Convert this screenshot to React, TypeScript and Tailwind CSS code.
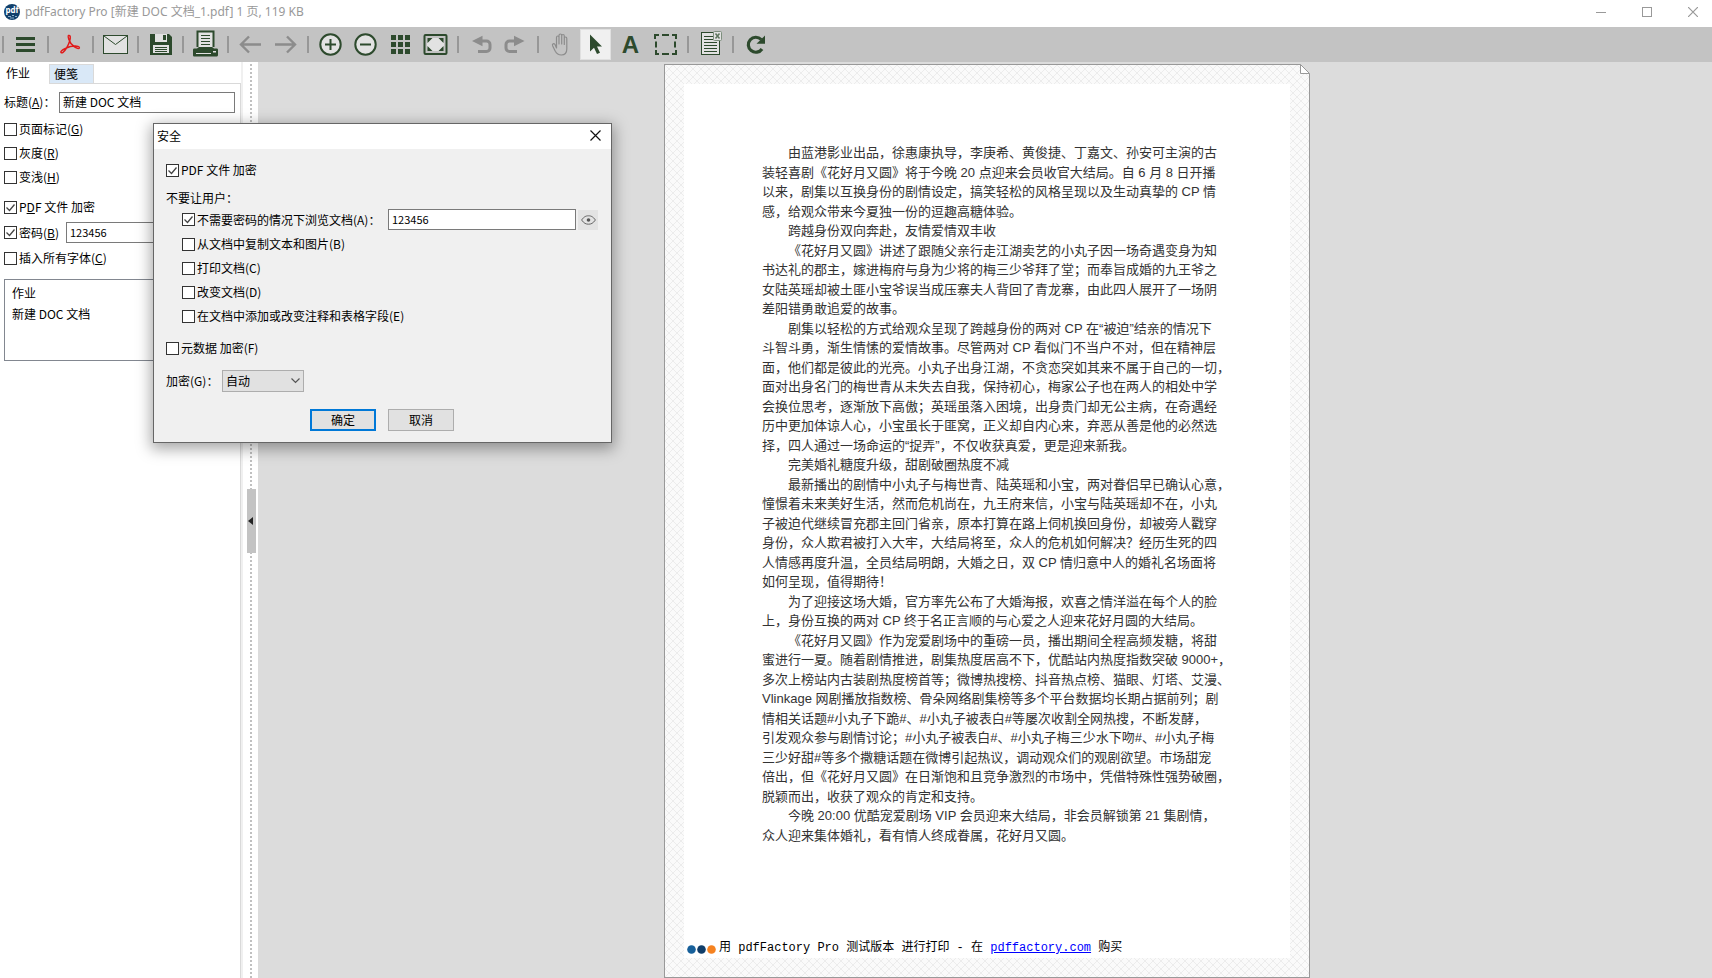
import { useState } from 'react';
import type { ReactNode } from 'react';

type Line = { text: string; indent?: boolean };

const articleLines: Line[] = [
  { text: '由蓝港影业出品，徐惠康执导，李庚希、黄俊捷、丁嘉文、孙安可主演的古', indent: true },
  { text: '装轻喜剧《花好月又圆》将于今晚 20 点迎来会员收官大结局。自 6 月 8 日开播' },
  { text: '以来，剧集以互换身份的剧情设定，搞笑轻松的风格呈现以及生动真挚的 CP 情' },
  { text: '感，给观众带来今夏独一份的逗趣高糖体验。' },
  { text: '跨越身份双向奔赴，友情爱情双丰收', indent: true },
  { text: '《花好月又圆》讲述了跟随父亲行走江湖卖艺的小丸子因一场奇遇变身为知', indent: true },
  { text: '书达礼的郡主，嫁进梅府与身为少将的梅三少爷拜了堂；而奉旨成婚的九王爷之' },
  { text: '女陆英瑶却被土匪小宝爷误当成压寨夫人背回了青龙寨，由此四人展开了一场阴' },
  { text: '差阳错勇敢追爱的故事。' },
  { text: '剧集以轻松的方式给观众呈现了跨越身份的两对 CP 在“被迫”结亲的情况下', indent: true },
  { text: '斗智斗勇，渐生情愫的爱情故事。尽管两对 CP 看似门不当户不对，但在精神层' },
  { text: '面，他们都是彼此的光亮。小丸子出身江湖，不贪恋突如其来不属于自己的一切，' },
  { text: '面对出身名门的梅世青从未失去自我，保持初心，梅家公子也在两人的相处中学' },
  { text: '会换位思考，逐渐放下高傲；英瑶虽落入困境，出身贵门却无公主病，在奇遇经' },
  { text: '历中更加体谅人心，小宝虽长于匪窝，正义却自内心来，弃恶从善是他的必然选' },
  { text: '择，四人通过一场命运的“捉弄”，不仅收获真爱，更是迎来新我。' },
  { text: '完美婚礼糖度升级，甜剧破圈热度不减', indent: true },
  { text: '最新播出的剧情中小丸子与梅世青、陆英瑶和小宝，两对眷侣早已确认心意，', indent: true },
  { text: '憧憬着未来美好生活，然而危机尚在，九王府来信，小宝与陆英瑶却不在，小丸' },
  { text: '子被迫代继续冒充郡主回门省亲，原本打算在路上伺机换回身份，却被旁人戳穿' },
  { text: '身份，众人欺君被打入大牢，大结局将至，众人的危机如何解决？经历生死的四' },
  { text: '人情感再度升温，全员结局明朗，大婚之日，双 CP 情归意中人的婚礼名场面将' },
  { text: '如何呈现，值得期待！' },
  { text: '为了迎接这场大婚，官方率先公布了大婚海报，欢喜之情洋溢在每个人的脸', indent: true },
  { text: '上，身份互换的两对 CP 终于名正言顺的与心爱之人迎来花好月圆的大结局。' },
  { text: '《花好月又圆》作为宠爱剧场中的重磅一员，播出期间全程高频发糖，将甜', indent: true },
  { text: '蜜进行一夏。随着剧情推进，剧集热度居高不下，优酷站内热度指数突破 9000+，' },
  { text: '多次上榜站内古装剧热度榜首等；微博热搜榜、抖音热点榜、猫眼、灯塔、艾漫、' },
  { text: 'Vlinkage 网剧播放指数榜、骨朵网络剧集榜等多个平台数据均长期占据前列；剧' },
  { text: '情相关话题#小丸子下跪#、#小丸子被表白#等屡次收割全网热搜，不断发酵，' },
  { text: '引发观众参与剧情讨论；#小丸子被表白#、#小丸子梅三少水下吻#、#小丸子梅' },
  { text: '三少好甜#等多个撒糖话题在微博引起热议，调动观众们的观剧欲望。市场甜宠' },
  { text: '倍出，但《花好月又圆》在日渐饱和且竞争激烈的市场中，凭借特殊性强势破圈，' },
  { text: '脱颖而出，收获了观众的肯定和支持。' },
  { text: '今晚 20:00 优酷宠爱剧场 VIP 会员迎来大结局，非会员解锁第 21 集剧情，', indent: true },
  { text: '众人迎来集体婚礼，看有情人终成眷属，花好月又圆。' },
];

const GREEN = '#2d4a2d';
const GRAY = '#8c8c8c';
const LIGHT = '#e2e2e2';

const icons: Record<string, ReactNode> = {
  menu: <path d="M8 10h19v3H8zM8 16h19v3H8zM8 22h19v3H8z" fill={GREEN} />,
  pdf: (
    <path
      d="M15.500 8.500c2-.5 2.200 2 1.200 5.500c-1 3.500-4.200 9.500-6.700 11.300c-1.500 1-2.700 0-1.800-1.200c1.500-2.200 8-4.600 13-5c3-.2 5.500.4 5.200 1.600c-.4 1.300-3.200.6-5.200-1c-2.300-1.900-4.700-5-5.400-7.500c-.5-1.700-.9-3.500-.3-3.700z"
      fill="none"
      stroke="#e01b1b"
      strokeWidth="1.500"
      strokeLinejoin="round"
    />
  ),
  mail: (
    <g fill={LIGHT} stroke={GREEN}>
      <rect x="5.500" y="8.500" width="24" height="18" />
      <path d="M6 9l11.500 8.500L29 9" fill="none" />
    </g>
  ),
  save: (
    <g>
      <path d="M7 7h19l3 3v18H7z" fill={GREEN} />
      <path d="M12 7h12v8H12z" fill={LIGHT} />
      <path d="M20 8h3v5h-3z" fill={GREEN} />
      <path d="M10 18h16v8H10z" fill={LIGHT} />
      <path d="M12 20.500h12M12 22.500h12M12 24.500h12" stroke={GREEN} />
    </g>
  ),
  print: (
    <g>
      <path d="M9.500 20V4.500h16V20" fill={LIGHT} stroke={GREEN} strokeWidth="2" />
      <path d="M13 8.500h9M13 11.500h9M13 14.500h9M13 17.500h9" stroke={GREEN} />
      <path d="M6 21.500h3l2-1.500h13l2 1.500h3c1 0 1 1 1 2V28c0 1-1 1.500-1.500 1.500h-22C5.500 29.500 5 29 5 28v-4.500c0-1 0-2 1-2z" fill={GREEN} />
      <path d="M8 26.500h15" stroke={LIGHT} />
      <path d="M25 24h3v1.500h-3z" fill={LIGHT} />
    </g>
  ),
  back: <path d="M28 17.500H8M16 9.500l-8 8 8 8" fill="none" stroke={GRAY} strokeWidth="2.400" />,
  forward: <path d="M7 17.500h20M19 9.500l8 8-8 8" fill="none" stroke={GRAY} strokeWidth="2.400" />,
  zoomIn: (
    <g stroke={GREEN} strokeWidth="2">
      <circle cx="17.500" cy="17.500" r="10.200" fill={LIGHT} />
      <path d="M12 17.500h11M17.500 12v11" />
    </g>
  ),
  zoomOut: (
    <g stroke={GREEN} strokeWidth="2">
      <circle cx="17.500" cy="17.500" r="10.200" fill={LIGHT} />
      <path d="M12 17.500h11" />
    </g>
  ),
  grid: <path d="M8 8h5v5H8zM15 8h5v5h-5zM22 8h5v5h-5zM8 15h5v5H8zM15 15h5v5h-5zM22 15h5v5h-5zM8 22h5v5H8zM15 22h5v5h-5zM22 22h5v5h-5z" fill={GREEN} />,
  fit: (
    <g>
      <rect x="6.500" y="8" width="22" height="19" rx="1" fill="#c3c3c3" stroke={GREEN} strokeWidth="2" />
      <path d="M13 11h9l4 4v5l-4 4h-9l-4-4v-5z" fill={LIGHT} />
      <path d="M9.500 11h5l-5 5zM25.500 11h-5l5 5zM9.500 24h5l-5-5zM25.500 24h-5l5-5z" fill={GREEN} />
    </g>
  ),
  undo: (
    <g>
      <path d="M9 14l10.500-5.200v10.400z" fill={GRAY} />
      <path d="M18 14h5.500a3.500 3.500 0 0 1 3.500 3.500v3.500a3.500 3.500 0 0 1-3.500 3.500H15" fill="none" stroke={GRAY} strokeWidth="3" />
    </g>
  ),
  redo: (
    <g>
      <path d="M26.500 14L16 8.800v10.400z" fill={GRAY} />
      <path d="M17 14h-5.500A3.500 3.500 0 0 0 8 17.500v3.500a3.500 3.500 0 0 0 3.500 3.500H19" fill="none" stroke={GRAY} strokeWidth="3" />
    </g>
  ),
  hand: (
    <path
      d="M13.500 21V10.500c0-2 2.500-2 2.500 0V17V8.500c0-2 2.700-2 2.700 0V17V9c0-2 2.600-2 2.600 0v8.500V11.500c0-2 2.500-2 2.500 0V22c0 4-2.300 6-5.500 6c-3.300 0-4.800-1.500-6-3.800l-2.700-5.500c-.7-1.700 1.300-2.700 2.400-1.200z"
      fill="none"
      stroke={GRAY}
      strokeWidth="1.200"
      strokeLinejoin="round"
    />
  ),
  select: <path d="M12 7.500v17l4-3.800 3 6.300 3-1.300-3-6.200h5z" fill={GREEN} />,
  text: (
    <text x="17.500" y="26" textAnchor="middle" fill={GREEN} fontFamily="Liberation Sans, sans-serif" fontWeight="700" fontSize="24">A</text>
  ),
  marquee: <path d="M7 12V8h4M14 8h7M24 8h4v4M27 14.500v6M28 23v4h-4M21 27h-7M11 27H8v-4M8 20.500v-6" fill="none" stroke={GREEN} strokeWidth="2" />,
  note: (
    <g>
      <rect x="8.500" y="5.500" width="18" height="22" fill={LIGHT} stroke={GREEN} />
      <path d="M11 9.500h9M11 12.500h9M11 15.500h13M11 18.500h13M11 21.500h13M11 24.500h13" stroke={GREEN} />
      <rect x="20.500" y="4.500" width="8" height="9" rx="1" fill={LIGHT} stroke="#7d8f7d" />
      <path d="M22.500 6.500l4 5M26.500 6.500l-4 5" stroke="#5e755e" strokeWidth="1.500" />
    </g>
  ),
  refresh: (
    <g>
      <path d="M23.200 12.500A7.500 7.500 0 1 0 24 22" fill="none" stroke={GREEN} strokeWidth="3.200" />
      <path d="M27 8.500v8.300h-8.500z" fill={GREEN} />
    </g>
  ),
};

// every group is followed by a divider
const toolGroups: Array<Array<{ id: string; label: string }>> = [
  [{ id: 'menu', label: '菜单' }],
  [{ id: 'pdf', label: 'PDF' }],
  [{ id: 'mail', label: '邮件' }],
  [{ id: 'save', label: '保存' }],
  [{ id: 'print', label: '打印' }],
  [{ id: 'back', label: '后退' }, { id: 'forward', label: '前进' }],
  [{ id: 'zoomIn', label: '放大' }, { id: 'zoomOut', label: '缩小' }, { id: 'grid', label: '缩略图' }, { id: 'fit', label: '适合窗口' }],
  [{ id: 'undo', label: '撤消' }, { id: 'redo', label: '重做' }],
  [{ id: 'hand', label: '手形' }, { id: 'select', label: '选择' }, { id: 'text', label: '文本' }, { id: 'marquee', label: '选框' }],
  [{ id: 'note', label: '便笺' }],
  [{ id: 'refresh', label: '刷新' }],
];

const TitleBar = () => (
  <header className="flex h-[27px] items-center justify-between bg-white pr-[14px] pl-1 text-xs text-[#999]">
    <div className="flex items-center gap-[5px] font-['Noto_Sans','Noto_Sans_CJK_SC',sans-serif] whitespace-nowrap">
      <svg width="16" height="16" viewBox="0 0 16 16" className="-mt-1">
        <circle cx="8" cy="8" r="8" fill="#12406b" />
        <text x="8" y="9" textAnchor="middle" fill="#fff" fontFamily="Open Sans, sans-serif" fontWeight="700" fontSize="8">pdf</text>
        <path d="M4 12.500h3M8 11.500h2M11 12.500h2M6 14h4" stroke="#8fb0cc" />
      </svg>
      <h1 className="-mt-1 leading-5">pdfFactory Pro [新建 DOC 文档_1.pdf] 1 页, 119 KB</h1>
    </div>
    <div className="flex items-center gap-9 pb-1">
      <button type="button" aria-label="最小化">
        <svg width="10" height="10" viewBox="0 0 10 10" className="block"><path d="M0 5.500h10" stroke="#999" /></svg>
      </button>
      <button type="button" aria-label="最大化">
        <svg width="10" height="10" viewBox="0 0 10 10" className="block"><rect x=".5" y=".5" width="9" height="9" fill="none" stroke="#999" /></svg>
      </button>
      <button type="button" aria-label="关闭">
        <svg width="10" height="10" viewBox="0 0 10 10" className="block"><path d="M0 0l10 10M10 0L0 10" stroke="#999" strokeWidth="1.200" /></svg>
      </button>
    </div>
  </header>
);

const Toolbar = () => (
  <div role="toolbar" className="flex h-[35px] bg-[#c3c3c3]">
    <span className="flex w-2 items-center pl-0.5"><i className="h-[17px] w-0.5 bg-[#979797]" /></span>
    {toolGroups.map((group, i) => (
      <div key={group[0].id} className="flex items-center">
        {group.map((tool) => (
          <button
            key={tool.id}
            type="button"
            aria-label={tool.label}
            className="grid h-[35px] w-[35px] place-items-center"
          >
            {tool.id === 'select' && <span className="col-start-1 row-start-1 h-[31px] w-[31px] border border-[#e0e0e0] bg-[#f0f0f0]" />}
            <svg width="35" height="35" viewBox="0 0 35 35" className="col-start-1 row-start-1">{icons[tool.id]}</svg>
          </button>
        ))}
        {i < toolGroups.length - 1 && (
          <span className="flex w-[10px] pl-1"><i className="h-[17px] w-0.5 bg-[#979797]" /></span>
        )}
      </div>
    ))}
  </div>
);

const Check = ({ children, checked = false }: { children: ReactNode; checked?: boolean }) => {
  const [on, setOn] = useState(checked);
  return (
    <label className="flex h-4 items-center gap-0.5 whitespace-nowrap">
      <span className="grid">
        <input
          type="checkbox"
          checked={on}
          onChange={(e) => setOn(e.target.checked)}
          className="col-start-1 row-start-1 h-[13px] w-[13px] appearance-none border border-[#333] bg-white"
        />
        {on && (
          <svg width="13" height="13" viewBox="0 0 13 13" className="pointer-events-none col-start-1 row-start-1">
            <path d="M2.500 6.500l3 3 5-6" fill="none" stroke="#444" strokeWidth="1.300" />
          </svg>
        )}
      </span>
      <span>{children}</span>
    </label>
  );
};

const SidePanel = () => (
  <aside className="flex w-[243px] shrink-0 flex-col border-r-2 border-[#f0f0f0] bg-white">
    <div role="tablist" className="flex h-[21px] items-end">
      <button role="tab" type="button" aria-selected="true" className="h-[21px] w-[49px] pl-1.5 text-left">作业</button>
      <button role="tab" type="button" aria-selected="false" className="h-[19px] w-[45px] border border-b-0 border-[#d9d9d9] bg-[#d9e8f7] pl-1 text-left">便笺</button>
    </div>
    <div className="flex-1 border-r border-[#d9d9d9]">
      <div className="ml-[49px] h-px bg-[#d9d9d9]" />
      <div className="flex flex-col pt-2 pr-[5px] pl-1">
        <div className="flex items-center gap-2">
          <label htmlFor="title" className="w-[47px] pb-0.5 whitespace-nowrap">标题(<u>A</u>)：</label>
          <input id="title" defaultValue="新建 DOC 文档" className="h-[21px] min-w-0 flex-1 border border-[#7a7a7a] bg-white px-[3px] pb-0.5" />
        </div>
        <div className="mt-2 flex flex-col gap-2">
          <Check>页面标记(<u>G</u>)</Check>
          <Check>灰度(<u>R</u>)</Check>
          <Check>变浅(<u>H</u>)</Check>
        </div>
        <div className="mt-3.5 flex flex-col gap-[7px]">
          <Check checked>P<u>D</u>F 文件 加密</Check>
          <div className="flex items-center gap-[7px]">
            <Check checked>密码(<u>B</u>)</Check>
            <input aria-label="密码" defaultValue="123456" className="h-[21px] w-[145px] border border-[#7a7a7a] bg-white px-[3px] pb-0.5 text-[11px]" />
          </div>
          <Check>插入所有字体(<u>C</u>)</Check>
        </div>
        <ul className="mt-[13px] h-[82px] border border-[#828790] px-[7px] pt-0.5 leading-[21px]">
          <li>作业</li>
          <li>新建 DOC 文档</li>
        </ul>
      </div>
    </div>
  </aside>
);

const Splitter = () => (
  <div className="grid w-[15px] shrink-0 place-items-center bg-white pt-0.5 pl-px">
    <span className="col-start-1 row-start-1 h-full w-0.5 bg-[repeating-linear-gradient(#c0c0c0_0_2px,transparent_2px_4px)]" />
    <button type="button" aria-label="折叠侧栏" className="col-start-1 row-start-1 grid h-16 w-[9px] place-items-center bg-[#c3c3c3]">
      <svg width="7" height="8" viewBox="0 0 7 8"><path d="M0 4l5-4v8z" fill="#222" /></svg>
    </button>
  </div>
);

const DocumentPage = () => (
  <article className="relative mt-0.5 flex w-[646px] flex-col border border-[#999] bg-[#fafafa] bg-[linear-gradient(45deg,transparent_46%,#ececec_46%_54%,transparent_54%),linear-gradient(-45deg,transparent_46%,#ececec_46%_54%,transparent_54%)] bg-size-[8px_8px] p-[19px]">
    <svg width="10" height="10" viewBox="0 0 10 10" className="absolute -top-px -right-px">
      <path d="M0 0h10v10z" fill="#dcdcdc" />
      <path d="M.5.500v9h9z" fill="#fff" stroke="#999" />
    </svg>
    <div className="flex flex-1 flex-col justify-between bg-white">
      <div className="px-[78px] pt-[59px] font-['Liberation_Sans','Noto_Sans_CJK_SC',sans-serif] text-[13px] leading-normal whitespace-nowrap text-[#333]">
        {articleLines.map((line) => (
          <p key={line.text} className={line.indent ? 'pl-[26px]' : ''}>{line.text}</p>
        ))}
      </div>
      <footer className="flex h-5 items-center gap-[3px] pl-[3px] font-['Liberation_Mono','Noto_Sans_CJK_SC',monospace] whitespace-nowrap">
        <svg width="29" height="9" viewBox="0 0 29 9" className="mt-0.5">
          <circle cx="4.500" cy="4.500" r="4.300" fill="#17609a" />
          <circle cx="14.500" cy="4.500" r="4.300" fill="#103d69" />
          <circle cx="24.500" cy="4.500" r="4.300" fill="#f58220" />
        </svg>
        <p>
          用 pdfFactory Pro 测试版本 进行打印 - 在 <a href="#pdffactory" className="text-[#0000ff] underline">pdffactory.com</a> 购买
        </p>
      </footer>
    </div>
  </article>
);

const SecurityDialog = () => (
  <form
    role="dialog"
    aria-label="安全"
    onSubmit={(e) => e.preventDefault()}
    className="absolute top-[123px] left-[153px] w-[459px] border border-[#666] bg-[#f0f0f0] pb-[11px] shadow-[0_4px_14px_2px_rgba(0,0,0,0.35)]"
  >
    <div className="flex h-[25px] items-center justify-between bg-white pr-2.5 pb-0.5 pl-[3px]">
      <h2>安全</h2>
      <button type="button" aria-label="关闭">
        <svg width="11" height="11" viewBox="0 0 11 11" className="block"><path d="M.5.500l10 10M10.500.500l-10 10" stroke="#111" strokeWidth="1.200" /></svg>
      </button>
    </div>
    <div className="flex flex-col px-3 pt-[13px]">
      <Check checked>PDF 文件 加密</Check>
      <p className="mt-3 leading-4">不要让用户：</p>
      <div className="mt-[3px] flex flex-col gap-1.5 pl-4">
        <div className="flex h-[21px] items-center">
          <div className="w-[206px]"><Check checked>不需要密码的情况下浏览文档(A)：</Check></div>
          <input aria-label="浏览密码" defaultValue="123456" className="h-[21px] w-[188px] border border-[#7a7a7a] bg-white px-[3px] pb-0.5 text-[11px]" />
          <button type="button" aria-label="显示密码" className="ml-0.5 grid h-5 w-5 place-items-center bg-[#e3e3e3]">
            <svg width="15" height="10" viewBox="0 0 15 10">
              <path d="M.6 5C3 1.600 5 .8 7.500.8S12 1.600 14.400 5C12 8.400 10 9.200 7.500 9.200S3 8.400.6 5z" fill="none" stroke="#666" />
              <circle cx="7.500" cy="5" r="1.800" fill="#555" />
            </svg>
          </button>
        </div>
        <div className="flex flex-col gap-2">
          <Check>从文档中复制文本和图片(B)</Check>
          <Check>打印文档(C)</Check>
          <Check>改变文档(D)</Check>
          <Check>在文档中添加或改变注释和表格字段(E)</Check>
        </div>
      </div>
      <div className="mt-4"><Check>元数据 加密(F)</Check></div>
      <div className="mt-3.5 flex items-center">
        <label htmlFor="cipher" className="w-14 whitespace-nowrap">加密(G)：</label>
        <div className="grid items-center">
          <select id="cipher" className="col-start-1 row-start-1 h-[22px] w-[82px] appearance-none border border-[#adadad] bg-[#e1e1e1] pl-[3px]">
            <option>自动</option>
          </select>
          <svg width="9" height="6" viewBox="0 0 9 6" className="pointer-events-none col-start-1 row-start-1 mr-1 justify-self-end">
            <path d="M.5.500l4 4 4-4" fill="none" stroke="#555" strokeWidth="1.200" />
          </svg>
        </div>
      </div>
      <div className="mt-[17px] flex gap-3 pl-36">
        <button type="submit" className="h-[22px] w-[66px] border-2 border-[#0078d7] bg-[#e1e1e1] leading-4">确定</button>
        <button type="button" className="h-[22px] w-[66px] border border-[#adadad] bg-[#e1e1e1] leading-4">取消</button>
      </div>
    </div>
  </form>
);

const App = () => {
  return (
    <div lang="zh-CN" className="relative flex min-h-screen flex-col overflow-hidden font-['Noto_Sans_CJK_SC',sans-serif] text-xs leading-4 text-black">
      <TitleBar />
      <Toolbar />
      <main className="flex flex-1">
        <SidePanel />
        <Splitter />
        <section className="flex flex-1 justify-center bg-[#dcdcdc] pl-1">
          <DocumentPage />
        </section>
      </main>
      <SecurityDialog />
    </div>
  );
};

export default App;
